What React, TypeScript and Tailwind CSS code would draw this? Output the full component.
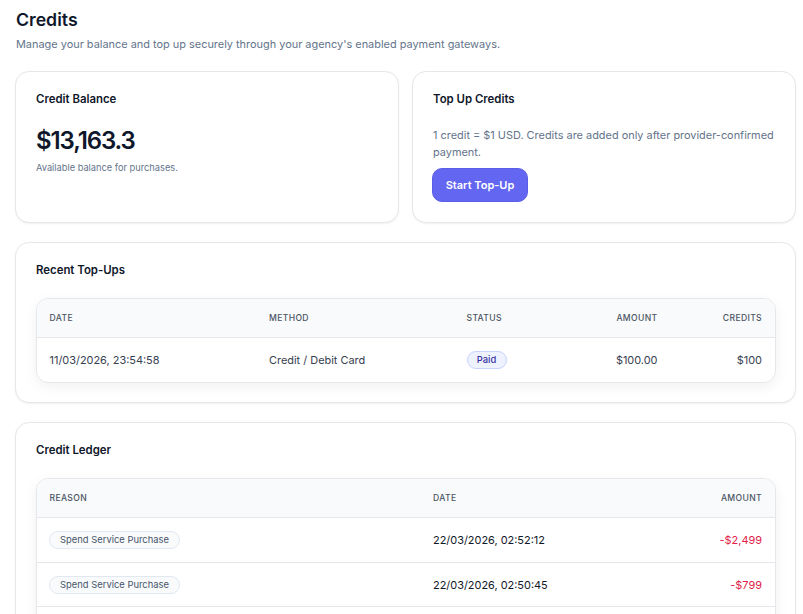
const ledger = [
  { date: '22/03/2026, 02:52:12', amount: '-$2,499', rowClass: 'h-[45px]' },
  { date: '22/03/2026, 02:50:45', amount: '-$799', rowClass: 'h-[44px] pt-[1px]' },
]

function Card({ title, className, children }: { title: string; className: string; children: React.ReactNode }) {
  return (
    <section className={`rounded-[14px] border border-[#e5e7eb] bg-white shadow-[0_1px_2px_rgba(15,23,42,0.06)] ${className}`}>
      <h2 className="pt-[17px] text-[11.4px] leading-[20px] font-semibold text-[#0f172a]">{title}</h2>
      {children}
    </section>
  )
}

function HeadCell({ className, children }: { className: string; children: React.ReactNode }) {
  return <div className={`text-[8.6px] font-medium tracking-[0.04em] text-[#4b5563] ${className}`}>{children}</div>
}

export default function App() {
  return (
    <div className="h-[614px] overflow-hidden bg-white font-['Inter',sans-serif]">
      <div className="ml-[15px] w-[781px]">
        <h1 className="pt-[7px] pl-[1px] text-[17.7px] leading-[26px] font-semibold text-[#0f172a]">Credits</h1>
        <p className="mt-[2px] pl-[1px] text-[10.93px] leading-[18px] text-[#64748b]">
          Manage your balance and top up securely through your agency's enabled payment gateways.
        </p>

        <div className="mt-[18px] flex gap-[13px]">
          <Card title="Credit Balance" className="h-[152px] w-[384px] px-5">
            <div className="mt-[16px] text-[24px] leading-[32px] font-semibold tracking-[-1.1px] text-[#0f172a]">$13,163.3</div>
            <p className="mt-[3px] text-[9.25px] leading-[16px] text-[#64748b]">Available balance for purchases.</p>
          </Card>
          <Card title="Top Up Credits" className="h-[152px] w-[384px] pr-[15px] pl-5">
            <p className="mt-[18px] text-[10.93px] leading-[17px] text-[#64748b]">
              1 credit = $1 USD. Credits are added only after provider-confirmed payment.
            </p>
            <button className="mt-[7px] -ml-[1px] h-[34px] w-[96px] rounded-[10px] border border-[#5b5ee9] bg-[#6366f1] text-[11px] font-semibold text-white">
              Start Top-Up
            </button>
          </Card>
        </div>

        <Card title="Recent Top-Ups" className="mt-[19px] h-[161px] pr-[19px] pl-5">
          <div className="mt-[18px] overflow-hidden rounded-[12px] border border-[#e5e7eb] shadow-[0_4px_14px_rgba(15,23,42,0.06)]">
            <div className="flex h-[39px] items-center border-b border-[#e5e7eb] bg-[#f9fafb] pr-[13px] pl-[12.5px]">
              <HeadCell className="w-[219.5px]">DATE</HeadCell>
              <HeadCell className="w-[197.5px]">METHOD</HeadCell>
              <HeadCell className="w-[100px]">STATUS</HeadCell>
              <HeadCell className="w-[91px] text-right">AMOUNT</HeadCell>
              <HeadCell className="flex-1 text-right">CREDITS</HeadCell>
            </div>
            <div className="flex h-[44px] items-center pr-[13px] pl-[12.5px] text-[10.93px] text-[#374151]">
              <div className="w-[219.5px]">11/03/2026, 23:54:58</div>
              <div className="w-[197.5px]">Credit / Debit Card</div>
              <div className="w-[100px]">
                <span className="inline-flex h-[18px] w-[40px] items-center justify-center rounded-full border border-[#c7d2fe] bg-[#eef2ff] text-[9.4px] font-medium text-[#3730a3]">
                  Paid
                </span>
              </div>
              <div className="w-[91px] text-right">$100.00</div>
              <div className="flex-1 text-right">$100</div>
            </div>
          </div>
        </Card>

        <Card title="Credit Ledger" className="mt-[19px] h-[400px] pr-[19px] pl-5">
          <div className="mt-[18px] overflow-hidden rounded-t-[12px] border border-[#e5e7eb] shadow-[0_4px_14px_rgba(15,23,42,0.06)]">
            <div className="flex h-[39px] items-center border-b border-[#e5e7eb] bg-[#f9fafb] pr-[13px] pl-[12.5px]">
              <HeadCell className="w-[383.5px]">REASON</HeadCell>
              <HeadCell className="w-[200px]">DATE</HeadCell>
              <HeadCell className="flex-1 text-right">AMOUNT</HeadCell>
            </div>
            {ledger.map((row) => (
              <div key={row.date} className={`flex items-center border-b border-[#e5e7eb] pr-[13px] pl-[12px] text-[10.93px] ${row.rowClass}`}>
                <div className="w-[384px]">
                  <span className="inline-flex h-[18px] w-[131px] items-center justify-center rounded-full border border-[#e2e8f0] bg-[#f8fafc] text-[9.4px] text-[#475569]">
                    Spend Service Purchase
                  </span>
                </div>
                <div className="w-[200px] text-[#111827]">{row.date}</div>
                <div className="flex-1 text-right text-[#e11d48]">{row.amount}</div>
              </div>
            ))}
            <div className="h-[44px]" />
          </div>
        </Card>
      </div>
    </div>
  )
}
